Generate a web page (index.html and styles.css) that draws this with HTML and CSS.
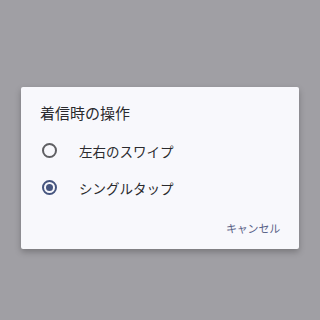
FILE: index.html
```html
<!DOCTYPE html>
<html lang="ja">
<head>
<meta charset="utf-8">
<link rel="stylesheet" href="styles.css">
</head>
<body>
<div class="dialog">
  <div class="title">着信時の操作</div>
  <div class="options">
    <div class="option">
      <span class="radio"></span>
      <span class="label">左右のスワイプ</span>
    </div>
    <div class="option">
      <span class="radio checked"></span>
      <span class="label">シングルタップ</span>
    </div>
  </div>
  <div class="actions">
    <span class="btn">キャンセル</span>
  </div>
</div>
</body>
</html>
```
FILE: styles.css
```css
html, body {
  margin: 0;
  padding: 0;
  height: 100%;
}
body {
  background: #a09fa4;
  font-family: "Noto Sans CJK JP", "Noto Sans", sans-serif;
  color: #2a2a2e;
}
.dialog {
  position: relative;
  top: 87px;
  margin-left: 21px;
  width: 278px;
  height: 162px;
  box-sizing: border-box;
  background: #f8f8fc;
  border-radius: 2px;
  box-shadow: 0 3px 6px rgba(0,0,0,0.25);
  padding: 16px 19px 0 19px;
}
.title {
  font-size: 15px;
  line-height: 20px;
  height: 20px;
}
.options {
  margin-top: 9px;
}
.option {
  display: flex;
  align-items: center;
  height: 37px;
}
.radio {
  width: 11px;
  height: 11px;
  border: 2px solid #5f5f63;
  border-radius: 50%;
  margin-left: 2px;
  position: relative;
  flex: none;
}
.radio.checked {
  border-color: #46557f;
}
.radio.checked::after {
  content: "";
  position: absolute;
  left: 2px;
  top: 2px;
  width: 7px;
  height: 7px;
  border-radius: 50%;
  background: #46557f;
}
.label {
  margin-left: 22px;
  font-size: 13.5px;
}
.actions {
  display: flex;
  justify-content: flex-end;
  margin-top: 14px;
}
.btn {
  font-size: 11px;
  line-height: 16px;
  color: #5a6388;
  letter-spacing: -0.2px;
}
```
